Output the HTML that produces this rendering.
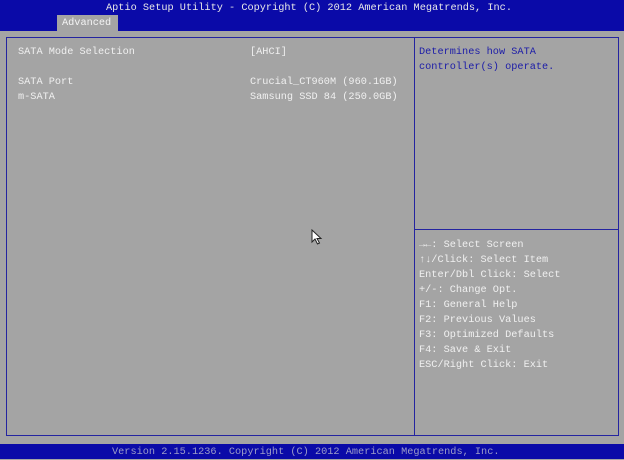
<!DOCTYPE html>
<html><head><style>
body{margin:0;width:624px;height:459px;background:#a4a4a4;position:relative;overflow:hidden;font-family:"Liberation Mono","DejaVu Sans Mono",monospace;font-size:10.25px;}
.t{position:absolute;white-space:pre;line-height:15px;}
#top{position:absolute;left:0;top:0;width:624px;height:31px;background:#0a0aa8;}
#foot{position:absolute;left:0;top:444px;width:624px;height:15px;background:#0a0aa8;}
#tab{position:absolute;left:57px;top:15px;width:61px;height:16px;background:#a4a4a4;}
#box{position:absolute;left:6px;top:37px;width:613px;height:399px;border:1px solid #2424a0;box-sizing:border-box;}
#vl{position:absolute;left:414px;top:37px;width:1px;height:399px;background:#2424a0;}
#hl{position:absolute;left:415px;top:229px;width:204px;height:1px;background:#2424a0;}
.w{color:#f0f0f0}.b{color:#1c1ca8}
</style></head><body>
<div id="top"></div>
<div id="tab"></div>
<div class="t" style="left:106px;top:1px;color:#e8e8e8">Aptio Setup Utility - Copyright (C) 2012 American Megatrends, Inc.</div>
<div class="t" style="left:62px;top:16px;color:#f4f4f4">Advanced</div>
<div id="box"></div><div id="vl"></div><div id="hl"></div>
<div class="t w" style="left:18px;top:45px">SATA Mode Selection</div>
<div class="t w" style="left:250px;top:45px">[AHCI]</div>
<div class="t w" style="left:18px;top:75px">SATA Port
m-SATA</div>
<div class="t w" style="left:250px;top:75px">Crucial_CT960M (960.1GB)
Samsung SSD 84 (250.0GB)</div>
<div class="t b" style="left:419px;top:45px">Determines how SATA
controller(s) operate.</div>
<div class="t w" style="left:419px;top:238px">→←: Select Screen
↑↓/Click: Select Item
Enter/Dbl Click: Select
+/-: Change Opt.
F1: General Help
F2: Previous Values
F3: Optimized Defaults
F4: Save &amp; Exit
ESC/Right Click: Exit</div>
<svg style="position:absolute;left:311px;top:229px" width="12" height="17"><path d="M1 1 L1 13 L4 10 L6.5 15 L8.5 14 L6 9.5 L10 9.5 Z" fill="#fff" stroke="#222" stroke-width="1"/></svg>
<div id="foot"></div>
<div class="t" style="left:112px;top:445px;color:#9c9cc8">Version 2.15.1236. Copyright (C) 2012 American Megatrends, Inc.</div>
</body></html>
